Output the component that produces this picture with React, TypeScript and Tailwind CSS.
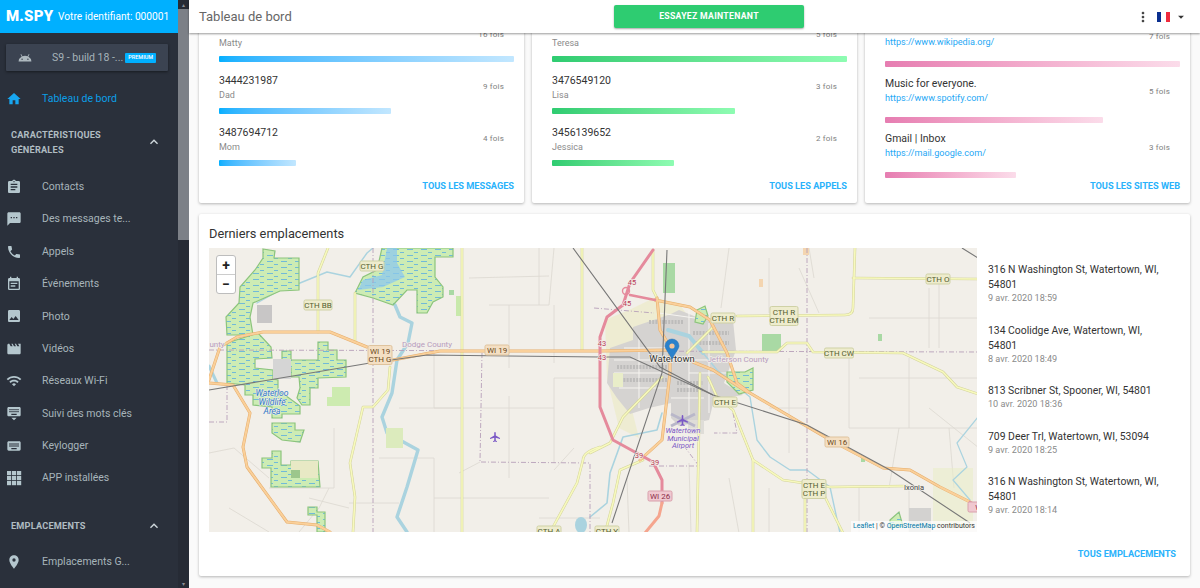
import type { ReactNode } from "react";
import {
  MdHome, MdAssignment, MdSms, MdPhone, MdEventNote, MdPhoto, MdMovie, MdWifi, MdKeyboard,
  MdKeyboardHide, MdPlace, MdAndroid, MdMoreVert, MdExpandLess, MdArrowDropDown, MdLocalAirport,
} from "react-icons/md";

const GridIcon = ({ size = 16 }: { size?: number }) => (
  <svg width={size} height={size} viewBox="0 0 16 16" fill="currentColor">
    {[1, 6, 11].map((y) => [1, 6, 11].map((x) => <rect key={`${x}-${y}`} x={x} y={y} width="4.2" height="4.2" />))}
  </svg>
);

const navTop = [
  { icon: <MdAssignment size={16} />, label: "Contacts" },
  { icon: <MdSms size={16} />, label: "Des messages te..." },
  { icon: <MdPhone size={16} />, label: "Appels" },
  { icon: <MdEventNote size={16} />, label: "Événements" },
  { icon: <MdPhoto size={16} />, label: "Photo" },
  { icon: <MdMovie size={16} />, label: "Vidéos" },
  { icon: <MdWifi size={16} />, label: "Réseaux Wi-Fi" },
  { icon: <MdKeyboardHide size={16} />, label: "Suivi des mots clés" },
  { icon: <MdKeyboard size={16} />, label: "Keylogger" },
  { icon: <GridIcon />, label: "APP installées" },
];

function NavItem({ icon, label, active }: { icon: ReactNode; label: string; active?: boolean }) {
  return (
    <div className={`flex h-[32.35px] items-center text-[10.5px] ${active ? "text-[#0a9fe8]" : "text-[#a7b4ba]"}`}>
      <span className={`ml-[6px] flex w-[36px] ${active ? "text-[#17a6f0]" : "text-[#b4c6cd]"}`}>{icon}</span>
      <span className="whitespace-nowrap">{label}</span>
    </div>
  );
}

function Sidebar() {
  return (
    <aside className="flex h-full w-[189px] shrink-0">
      <div className="w-[178px] shrink-0 overflow-hidden bg-[#2a303b]">
        <div className="flex h-[33px] items-center bg-[#00b0ff] pl-[6px] text-white">
          <span className="w-[52px] text-[15px] font-black leading-none tracking-[0.2px]">M.SPY</span>
          <span className="whitespace-nowrap text-[10.2px]">Votre identifiant: 000001</span>
        </div>
        <div className="ml-[6px] mt-[11px] flex h-[27px] w-[162px] items-center rounded-[1px] bg-[#3b4351] shadow-[0_1px_3px_rgba(0,0,0,0.45)]">
          <MdAndroid size={14} className="ml-[12px] text-[#aeb9bf]" />
          <span className="ml-[20px] whitespace-nowrap text-[10.5px] text-[#a7b4ba]">S9 - build 18 -...</span>
          <span className="ml-[2px] flex h-[10px] w-[31px] items-center justify-center rounded-[1px] bg-[#00b0ff] text-[5.5px] font-medium text-white">PREMIUM</span>
        </div>
        <div className="mt-[12px]">
          <NavItem active icon={<MdHome size={16} />} label="Tableau de bord" />
        </div>
        <div className="mt-[4px] flex h-[46px] items-center justify-between pl-[11px] pr-[16px]">
          <span className="text-[9.2px] font-bold leading-[15.5px] tracking-[0.2px] text-[#b0bcc2]">CARACTÉRISTIQUES<br />GÉNÉRALES</span>
          <MdExpandLess size={16} className="text-[#cfd8dc]" />
        </div>
        <div className="mt-[5.5px]">
          {navTop.map((n) => <NavItem key={n.label} icon={n.icon} label={n.label} />)}
        </div>
        <div className="mt-[23.5px] flex h-[16px] items-center justify-between pl-[11px] pr-[16px]">
          <span className="text-[9.2px] font-bold tracking-[0.2px] text-[#b0bcc2]">EMPLACEMENTS</span>
          <MdExpandLess size={16} className="text-[#cfd8dc]" />
        </div>
        <div className="mt-[12px]">
          <NavItem icon={<MdPlace size={16} />} label="Emplacements G..." />
        </div>
      </div>
      <div className="flex w-[11px] shrink-0 flex-col bg-[#262b35]">
        <div className="flex h-[9px] items-center justify-center text-[6px] leading-none text-[#8b8f96]">▴</div>
        <div className="h-[231px] bg-[#7c8087]" />
        <div className="mt-auto flex h-[9px] items-center justify-center text-[6px] leading-none text-[#8b8f96]">▾</div>
      </div>
    </aside>
  );
}

// first row's top line sits under the fixed header, so it stays empty
const msgs = [
  { top: "", sub: "Matty", n: "16 fois", w: 295 },
  { top: "3444231987", sub: "Dad", n: "9 fois", w: 172 },
  { top: "3487694712", sub: "Mom", n: "4 fois", w: 77 },
];
const calls = [
  { top: "", sub: "Teresa", n: "5 fois", w: 295 },
  { top: "3476549120", sub: "Lisa", n: "3 fois", w: 183 },
  { top: "3456139652", sub: "Jessica", n: "2 fois", w: 122 },
];
const sites = [
  { top: "", sub: "https://www.wikipedia.org/", n: "7 fois", w: 295 },
  { top: "Music for everyone.", sub: "https://www.spotify.com/", n: "5 fois", w: 218 },
  { top: "Gmail | Inbox", sub: "https://mail.google.com/", n: "3 fois", w: 131 },
];

function StatCard({ rows, bar, link, web }: { rows: typeof msgs; bar: string; link: string; web?: boolean }) {
  return (
    <div className="flex h-[183px] flex-col rounded-[2px] bg-white pb-[10px] pl-[20px] pr-[10px] shadow-[0_1px_3px_rgba(0,0,0,0.28)]">
      <div className={`flex flex-col ${web ? "gap-[8.5px]" : "gap-[10px]"}`}>
        {rows.map((r) => (
          <div key={r.sub}>
            <div className={`flex items-center justify-between pr-[10px] ${web ? "" : "pt-[0.5px]"}`}>
              <div>
                <div className="h-[15px] text-[10.5px] leading-[15px] text-[#333]">{r.top}</div>
                <div className={`h-[14px] leading-[14px] ${web ? "text-[9.1px] text-[#1fa8f5]" : "text-[9px] text-[#8a8a8a]"}`}>{r.sub}</div>
              </div>
              <span className={`text-[8px] tracking-[0.2px] text-[#808080] ${web ? "pt-[4px]" : ""}`}>{r.n}</span>
            </div>
            <div className={`${web ? "mt-[12px]" : "mt-[6.5px]"} h-[6px] rounded-[1px] ${bar}`} style={{ width: r.w }} />
          </div>
        ))}
      </div>
      <div className="mt-auto text-right text-[9.2px] font-bold leading-[14px] text-[#29b2fb]">{link}</div>
    </div>
  );
}

const places = [
  { a: "316 N Washington St, Watertown, WI, 54801", d: "9 avr. 2020 18:59" },
  { a: "134 Coolidge Ave, Watertown, WI, 54801", d: "8 avr. 2020 18:49" },
  { a: "813 Scribner St, Spooner, WI, 54801", d: "10 avr. 2020 18:36" },
  { a: "709 Deer Trl, Watertown, WI, 53094", d: "9 avr. 2020 18:25" },
  { a: "316 N Washington St, Watertown, WI, 54801", d: "9 avr. 2020 18:14" },
];

const wetlands = [
  "54,1 66,3 65,10 90,10 90,42 71,43 44,55 41,69 44,87 18,87 17,69 30,55 31,39 46,22 54,10",
  "18,95 49,85 62,99 63,110 46,111 46,120 64,122 64,131 69,132 69,142 91,158 91,166 73,166 73,170 63,170 63,159 44,157 44,147 36,147 36,137 18,135",
  "109,94 119,94 119,102 128,102 128,112 137,112 137,129 109,130 109,140 101,140 101,157 93,157 88,150 91,140 90,129 82,129 82,120 73,120 73,103 82,103 82,112 109,112",
  "173,0 244,0 244,9 226,9 226,29 234,39 234,49 224,54 218,65 208,65 208,42 198,42 184,57 164,50 146,45 154,29 168,22",
  "63,175 86,175 86,182 95,182 91,194 73,192 63,185",
  "63,203 72,203 72,217 82,217 82,213 109,213 111,239 62,239 62,220 53,220 53,210 63,210",
  "99,259 108,259 108,264 116,264 116,284 108,284 108,267 99,267",
  "488,62 496,58 499,68 494,76 486,74",
  "518,124 536,124 544,120 544,142 530,146 518,134",
  "681,272 690,264 694,278 681,280",
];

const yellowRoads = [
  "M119,0 L109,25 L109,84", "M146,45 L146,94", "M181,119 L179,142 L164,159 L154,159 L141,215 L146,249 L144,284",
  "M253,0 L253,284", "M373,0 L373,102", "M391,199 Q374,204 374,212 L368,235 L344,279",
  "M444,2 L444,42 L448,50", "M646,0 L644,60 Q644,67 636,67 L528,68", "M644,30 L769,31",
  "M494,104 L568,104 L578,95 L598,95 L604,104 L694,105 L734,124 L748,139 L769,146",
  "M491,125 L488,285", "M499,129 L508,149 L524,162 L544,212 L574,232 L594,235 L621,239 L698,238",
  "M544,212 L544,285", "M616,249 L634,285", "M596,249 L596,285",
  "M453,129 L414,169 L401,195 L381,205", "M434,212 L411,222 L404,255 L396,285", "M504,79 L478,105",
];

const orangeRoads = [
  "M0,135 L24,137 L41,165 L34,199 L38,219 L78,274 L108,277 L121,284",
  "M0,132 L11,99 L28,89 L54,84 L121,84 L158,99",
  "M184,112 L231,103 L391,103 L461,102",
  "M446,52 L481,59 L501,72 L518,105 L528,135 L541,145 L621,192 L674,220 L701,222 L731,239 L761,254",
  "M448,50 L451,82 L461,99 L461,125 L453,192 L431,212",
  "M484,114 L504,122 L538,144",
];

const minorRoads = [
  "M280,57 L340,57 L345,0", "M260,30 L340,28", "M300,57 L300,120", "M345,57 L345,115", "M330,0 L330,57",
  "M220,0 L220,40", "M225,105 L225,160 L345,160 L345,130 L391,130", "M300,148 L300,230", "M345,160 L345,215",
  "M365,200 L345,222", "M271,214 L250,225", "M0,205 L25,200 L60,230", "M125,180 L125,240 L60,240",
  "M170,210 L225,210 L225,284", "M225,250 L340,250", "M190,160 L253,160", "M330,270 L391,270",
  "M100,250 L140,260", "M20,260 L60,284", "M90,284 L110,260 L120,240", "M140,255 L190,255",
  "M560,10 L560,65", "M520,0 L512,60", "M580,110 L580,205", "M640,110 L640,180 L769,180",
  "M700,110 L700,180", "M650,130 L769,130", "M720,40 L720,100", "M660,70 L769,70", "M690,180 L680,240",
  "M770,200 L720,160", "M560,160 L600,160", "M520,230 L530,285", "M650,238 L650,285", "M730,30 L730,100",
  "M740,180 L745,240", "M700,238 L700,285", "M560,240 L560,285", "M480,215 L482,285", "M418,230 L420,285",
  "M605,30 L600,0", "M610,65 L590,20",
];

function Shield({ x, y, w, lines, kind = "y" }: { x: number; y: number; w: number; lines: string[]; kind?: "y" | "o" | "p" }) {
  const h = lines.length === 2 ? 19 : 10;
  const fill = kind === "y" ? "#eeeccd" : kind === "o" ? "#f4dfc3" : "#f0c8d0";
  const stroke = kind === "y" ? "#cfd1a5" : kind === "o" ? "#dfc39d" : "#d8a0ac";
  const color = kind === "y" ? "#55602f" : kind === "o" ? "#6b4a20" : "#8a2f48";
  return (
    <g>
      <rect x={x - w / 2} y={y - h / 2} width={w} height={h} rx="1.5" fill={fill} stroke={stroke} />
      {lines.map((l, i) => (
        <text key={l} x={x} y={y + 3 + (lines.length === 2 ? i * 8 - 4 : 0)} textAnchor="middle" fontSize="8" fill={color}>{l}</text>
      ))}
    </g>
  );
}

function MapArt() {
  return (
    <svg width="768" height="284" viewBox="0 0 768 284" className="block font-['Roboto']">
      <defs>
        <pattern id="marsh" width="14" height="6" patternUnits="userSpaceOnUse">
          <rect width="14" height="6" fill="#cdecb4" />
          <rect x="2" y="1" width="6" height="0.8" fill="#5aaee2" />
          <rect x="9" y="4" width="4" height="0.8" fill="#5aaee2" />
        </pattern>
      </defs>
      <rect width="768" height="284" fill="#f2efe9" />
      {minorRoads.map((d) => <path key={d} d={d} fill="none" stroke="#dcd8d0" strokeWidth="0.8" />)}

      {/* town land use */}
      <polygon points="396,72 420,62 445,50 470,55 480,70 440,95 420,150 430,190 410,180 398,130" fill="#ecebc8" opacity="0.7" />
      <path d="M401,100 L424,92 L424,79 L462,66 L470,62 L490,70 L524,72 L527,102 L515,135 L534,147 L505,152 L500,172 L470,178 L462,170 L462,155 L440,160 L421,166 L408,150 L398,135 Z" fill="#d5d3d1" />
      <path d="M405,112 L520,112 M405,125 L461,125 M480,125 L525,125 M430,90 L430,160 M480,62 L480,170 M500,75 L500,165 M410,140 L460,140 M462,150 L495,150 M450,65 L500,72 M415,100 L460,100" stroke="#f6f4f0" strokeWidth="1" fill="none" />
      <path d="M408,119 h50 M408,132 h50 M468,135 h26 M468,142 h26 M440,74 h34 M484,85 h36 M484,95 h36" stroke="#bdbcbb" strokeWidth="4" strokeDasharray="2 1.2" fill="none" />
      <rect x="404" y="125" width="10" height="14" fill="#e9edc9" />
      <rect x="454" y="15" width="12" height="30" fill="#a9d9a4" />
      <rect x="553" y="86" width="19" height="17" fill="#a9d9a4" />
      <rect x="479" y="172" width="16" height="14" fill="#dfddd8" />
      <rect x="550" y="31" width="4" height="8" fill="#f4d5b0" />
      <rect x="594" y="0" width="6" height="7" fill="#f4d5b0" />
      <rect x="669" y="86" width="4" height="7" fill="#a9d9a4" />
      <rect x="652" y="210" width="4" height="4" fill="#a9d9a4" />
      <rect x="724" y="220" width="40" height="60" fill="#e9edc9" opacity="0.6" />
      <rect x="700" y="260" width="22" height="24" fill="#d3d2d0" />

      {/* water */}
      <g fill="none" stroke="#aad3df" strokeLinejoin="round" strokeLinecap="round">
        <path d="M186,57 L191,69 L203,75 L199,95 L188,112 L183,145 L173,169 L178,185 L209,202 L198,239 L188,269 L198,284" strokeWidth="3.4" />
        <path d="M48,55 L71,42 L91,35 L118,24 L141,29 L158,5 L164,0" strokeWidth="1.4" />
        <path d="M494,105 L508,122 L541,149 L548,192 L561,209 L581,222 L598,222 L621,239 L631,285" strokeWidth="1.4" />
        <path d="M453,165 L448,182 L414,189 L401,225 L398,255 L381,269" strokeWidth="1.6" />
        <path d="M769,169 L748,195 L758,219 L744,232 L761,252" strokeWidth="1.2" />
        <path d="M459,82 L480,88 L494,105" strokeWidth="4" />
        <path d="M0,118 L8,135" strokeWidth="3" />
      </g>
      <ellipse cx="372" cy="277" rx="6" ry="8" fill="#aad3df" />

      {wetlands.map((p) => <polygon key={p} points={p} fill="url(#marsh)" stroke="#8cc47c" strokeWidth="1.2" />)}
      <polygon points="178,0 188,0 188,15 196,29 174,39 149,42 154,32 173,27" fill="#8cc8ee" opacity="0.75" />
      <rect x="48" y="57" width="15" height="18" fill="#c8c6c6" />
      <rect x="64" y="111" width="18" height="20" fill="#d5d5d5" />
      <polygon points="123,139 141,139 141,158 118,158 118,149 123,149" fill="#cdebb0" />
      <rect x="82" y="213" width="27" height="17" fill="#e8e9c5" />
      <rect x="82" y="222" width="9" height="8" fill="#9cc78c" />
      <rect x="177" y="180" width="17" height="20" fill="#dcebbd" />
      <rect x="240" y="42" width="5" height="5" fill="#a9d9a4" />
      <rect x="247" y="48" width="6" height="20" fill="#c8e9ab" />

      {/* admin boundaries */}
      <g fill="none" stroke="#b79fb9" strokeWidth="0.9" strokeDasharray="5 2 1 2">
        <path d="M164,0 L164,284" />
        <path d="M0,102 L769,104" />
        <path d="M598,0 L598,284" />
        <path d="M273,105 L271,214 L381,215 L381,284" />
        <path d="M0,174 L18,174 L18,135" />
        <path d="M385,60 L445,65 M475,198 L490,218 L440,218 M524,165 L528,185 L505,185" />
      </g>

      {/* roads */}
      <g fill="none" strokeLinecap="round" strokeLinejoin="round">
        {yellowRoads.map((d) => <path key={d} d={d} stroke="#d3d39a" strokeWidth="2.6" />)}
        {yellowRoads.map((d) => <path key={d + "i"} d={d} stroke="#f7f9bd" strokeWidth="1.6" />)}
        {orangeRoads.map((d) => <path key={d} d={d} stroke="#e6ad6c" strokeWidth="3" />)}
        {orangeRoads.map((d) => <path key={d + "i"} d={d} stroke="#fad09a" strokeWidth="2" />)}
        <path d="M444,2 L421,35 L414,57 L398,69 L391,89 L391,159 L404,192 L444,214 L453,232 L453,255" stroke="#e58a9c" strokeWidth="3" />
        <path d="M421,47 L446,52 M761,254 L769,258" stroke="#e58a9c" strokeWidth="2.4" />
        <circle cx="417" cy="43" r="3.5" stroke="#e58a9c" strokeWidth="1.4" />
        <path d="M453,255 L450,268 L436,285" stroke="#f5a58e" strokeWidth="3" />
      </g>

      {/* rail */}
      <g fill="none" stroke="#777" strokeWidth="1.1">
        <path d="M0,142 L161,115 L218,107 L391,109 L421,109 L504,147 L598,177 L681,222 L761,275" />
        <path d="M364,0 L451,119 L504,147" />
        <path d="M458,2 L453,125 L403,275 M753,0 L769,10" />
      </g>

      <Shield x={163} y={18} w={24} lines={["CTH G"]} />
      <Shield x={109} y={57} w={28} lines={["CTH BB"]} />
      <Shield x={171} y={107} w={24} lines={["WI 19", "CTH G"]} kind="o" />
      <Shield x={288} y={102} w={24} lines={["WI 19"]} kind="o" />
      <Shield x={729} y={31} w={24} lines={["CTH O"]} />
      <Shield x={514} y={70} w={24} lines={["CTH R"]} />
      <Shield x={575} y={68} w={28} lines={["CTH R", "CTH EM"]} />
      <Shield x={630} y={105} w={29} lines={["CTH CW"]} />
      <Shield x={516} y={154} w={24} lines={["CTH E"]} />
      <Shield x={628} y={194} w={24} lines={["WI 16"]} kind="o" />
      <Shield x={605} y={241} w={24} lines={["CTH E", "CTH P"]} />
      <Shield x={451} y={248} w={24} lines={["WI 26"]} kind="p" />
      <Shield x={398} y={283} w={24} lines={["CTH Y"]} />
      <Shield x={340} y={283} w={24} lines={["CTH A"]} />
      <Shield x={771} y={259} w={24} lines={["WI"]} kind="p" />

      {[[393, 95, "43"], [393, 109, "43"], [423, 34, "45"], [418, 55, "45"], [430, 207, "39"], [446, 214, "39"]].map(([x, y, t]) => (
        <text key={`${x}-${y}`} x={x as number} y={(y as number) + 3} textAnchor="middle" fontSize="7.5" fill="#b83a58" stroke="#f2efe9" strokeWidth="1.5" paintOrder="stroke">{t}</text>
      ))}

      <g fontSize="8" textAnchor="middle" stroke="#f2efe9" strokeWidth="1.5" paintOrder="stroke">
        <text x="218" y="99" fill="#b79cbe">Dodge County</text>
        <text x="529" y="114" fill="#b79cbe">Jefferson County</text>
        <text x="8" y="99" fill="#b79cbe">unty</text>
        <text x="463" y="114" fontSize="9.4" fill="#333">Watertown</text>
        <text x="705" y="242" fontSize="7.5" fill="#444">Ixonia</text>
      </g>
      <g fontSize="8.5" fontStyle="italic" textAnchor="middle" fill="#2f78c8" stroke="#f2efe9" strokeWidth="1" paintOrder="stroke">
        <text x="63" y="148">Waterloo</text>
        <text x="63" y="157">Wildlife</text>
        <text x="63" y="166">Area</text>
      </g>
      <g fontSize="7.5" fontStyle="italic" textAnchor="middle" fill="#7a57c5" stroke="#f2efe9" strokeWidth="1" paintOrder="stroke">
        <text x="474" y="185">Watertown</text>
        <text x="474" y="192.5">Municipal</text>
        <text x="474" y="200">Airport</text>
      </g>
      <path d="M462,166 L486,178 M462,178 L486,166" stroke="#b9b7c9" strokeWidth="3" />
      <foreignObject x="280" y="183" width="14" height="14"><MdLocalAirport size={12} className="text-[#7a57c5]" /></foreignObject>
      <foreignObject x="467" y="166" width="14" height="14"><MdLocalAirport size={13} className="text-[#7a57c5]" /></foreignObject>

      {/* marker */}
      <path d="M463,111 C459,104 456,100 456,98 A7,7 0 1 1 470,98 C470,100 467,104 463,111 Z" fill="#2a81cb" stroke="#2470b4" strokeWidth="0.5" />
      <circle cx="463" cy="98" r="2.6" fill="#f3c59c" />
    </svg>
  );
}

function MapPanel() {
  return (
    <div className="relative h-[284px] w-[768px] shrink-0 overflow-hidden">
      <MapArt />
      <div className="absolute left-[7px] top-[7px] flex h-[39px] w-[20px] flex-col overflow-hidden rounded-[3px] border border-[#bdbdbd] bg-white text-[14px] font-bold leading-none text-[#222]">
        <div className="flex h-[19px] items-center justify-center border-b border-[#ccc]">+</div>
        <div className="flex flex-1 items-center justify-center">−</div>
      </div>
      <div className="absolute bottom-0 right-0 bg-white/70 px-[2px] text-[7px] leading-[11px] text-[#333]">
        <span className="text-[#0078a8]">Leaflet</span> | © <span className="text-[#0078a8]">OpenStreetMap</span> contributors
      </div>
    </div>
  );
}

export default function App() {
  return (
    <div className="flex h-[588px] w-[1200px] overflow-hidden bg-[#fafafa] font-['Roboto',sans-serif]">
      <Sidebar />
      <main className="flex min-w-0 flex-1 flex-col">
        <header className="relative z-10 grid h-[33px] shrink-0 grid-cols-[415px_190px_1fr] items-center bg-white pl-[10px] shadow-[0_1px_2px_rgba(0,0,0,0.4)]">
          <h1 className="text-[13px] font-normal text-[#666]">Tableau de bord</h1>
          <button className="flex h-[23px] items-center justify-center rounded-[2px] bg-[#2ecc71] text-[8.7px] font-bold tracking-[0.3px] text-white shadow-[0_1px_2px_rgba(0,0,0,0.35)]">ESSAYEZ MAINTENANT</button>
          <div className="flex items-center justify-end pr-[12px]">
            <MdMoreVert size={16} className="text-[#444]" />
            <div className="ml-[6px] flex h-[10px] w-[13px]">
              <span className="flex-1 bg-[#0a2f8f]" />
              <span className="flex-1 bg-white" />
              <span className="flex-1 bg-[#ef2b3d]" />
            </div>
            <MdArrowDropDown size={14} className="ml-[4px] text-[#333]" />
          </div>
        </header>
        <div className="flex-1 overflow-hidden px-[10px]">
          <div className="-mt-[13px] grid grid-cols-3 gap-[8px]">
            <StatCard rows={msgs} bar="bg-gradient-to-r from-[#00b0ff] to-[#c2e7ff]" link="TOUS LES MESSAGES" />
            <StatCard rows={calls} bar="bg-gradient-to-r from-[#2ecc71] to-[#8efcb2]" link="TOUS LES APPELS" />
            <StatCard web rows={sites} bar="bg-gradient-to-r from-[#e67db1] to-[#fbdcea]" link="TOUS LES SITES WEB" />
          </div>
          <section className="mt-[11px] h-[362px] rounded-[2px] bg-white px-[10px] shadow-[0_1px_3px_rgba(0,0,0,0.28)]">
            <h2 className="flex h-[34px] items-end pb-[7px] text-[12.8px] font-normal leading-none text-[#333]">Derniers emplacements</h2>
            <div className="flex gap-[11px]">
              <MapPanel />
              <div className="flex w-[180px] flex-col gap-[17.5px] pt-[14px]">
                {places.map((p, i) => (
                  <div key={i}>
                    <div className="text-[10.4px] leading-[15px] text-[#333]">{p.a}</div>
                    <div className="text-[9.1px] leading-[13px] text-[#8a8a8a]">{p.d}</div>
                  </div>
                ))}
              </div>
            </div>
            <div className="mt-[15px] pr-[4px] text-right text-[9.2px] font-bold leading-[14px] text-[#29b2fb]">TOUS EMPLACEMENTS</div>
          </section>
        </div>
      </main>
    </div>
  );
}
